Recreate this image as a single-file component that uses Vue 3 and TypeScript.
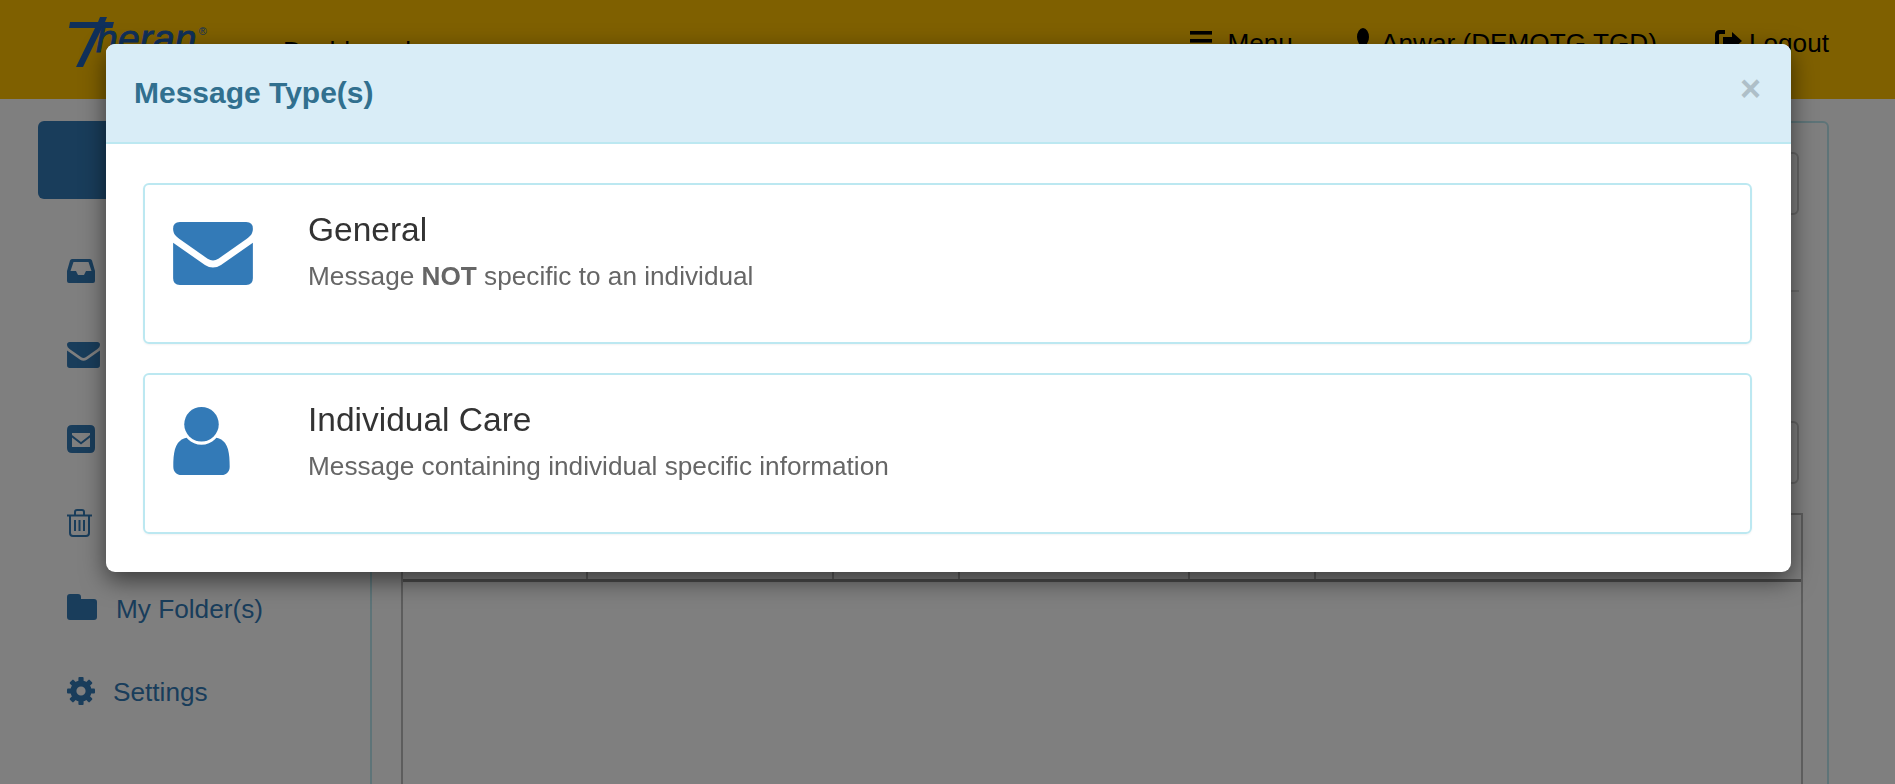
<script setup lang="ts">
const gearTeeth: number[] = [0, 45, 90, 135, 180, 225, 270, 315]
const columns: number[] = [185, 246, 126, 230, 126]
</script>

<template>
  <div class="page">
    <header class="topbar">
      <div class="logo">
        <svg class="logo-t" viewBox="0 0 46 50" aria-hidden="true">
          <path d="M1 5 H29 L31 0 H38 L36 5 H45 L43.500 11 H33 L14 50 H7 L26 11 H0 Z" />
        </svg>
        <span class="logo-word">heran</span>
        <span class="logo-reg">®</span>
      </div>
      <span class="dash">Dashboard</span>
      <nav class="nav">
        <a class="nav-item">
          <svg class="ic-menu" viewBox="0 0 22 20" aria-hidden="true">
            <rect y="0" width="22" height="3.600" />
            <rect y="8" width="22" height="3.600" />
            <rect y="16" width="22" height="3.600" />
          </svg>
          Menu
        </a>
        <a class="nav-item user">
          <svg class="ic-user" viewBox="0 0 12 24" aria-hidden="true">
            <ellipse cx="6" cy="9" rx="6" ry="9" />
            <rect y="16" width="12" height="8" rx="3" />
          </svg>
          Anwar (DEMOTG TGD)
        </a>
        <a class="nav-item logout">
          <svg class="ic-logout" viewBox="0 0 27 24" aria-hidden="true">
            <path d="M10 2 H5 Q2 2 2 5 V19 Q2 22 5 22 H10" fill="none" stroke="#000" stroke-width="4" />
            <path d="M8 7 H17 V2 L27 11 L17 20 V15 H8 Z" />
          </svg>
          Logout
        </a>
      </nav>
    </header>

    <main class="main">
      <aside class="sidebar">
        <button class="compose" type="button"></button>
        <ul class="side-list">
          <li class="side-item">
            <svg class="side-ic" width="28" height="24" viewBox="0 0 28 24" aria-hidden="true">
              <path fill-rule="evenodd" d="M5 0 H23 Q24.500 0 25 1.500 L28 12 V22 Q28 24 26 24 H2 Q0 24 0 22 V12 L3 1.500 Q3.500 0 5 0 Z M6.500 3 L3.500 12 H9 L11 16 H17 L19 12 H24.500 L21.500 3 Z" />
            </svg>
          </li>
          <li class="side-item">
            <svg class="side-ic" width="33" height="26" viewBox="0 0 238 188" aria-hidden="true">
              <path d="M20 0 H218 Q238 0 238 20 C238 35 230 42 220 50 L135 110 Q119 120 103 110 L18 50 C8 42 0 35 0 20 Q0 0 20 0 Z" />
              <path d="M0 62 L95 128 Q119 143 143 128 L238 62 V168 Q238 188 218 188 H20 Q0 188 0 168 Z" />
            </svg>
          </li>
          <li class="side-item">
            <svg class="side-ic" width="28" height="28" viewBox="0 0 28 28" aria-hidden="true">
              <path fill-rule="evenodd" d="M5 0 H23 Q28 0 28 5 V23 Q28 28 23 28 H5 Q0 28 0 23 V5 Q0 0 5 0 Z M5 8 V10 L14 17 L23 10 V8 Z M5 12.500 V22 H23 V12.500 L14 19.500 Z" />
            </svg>
          </li>
          <li class="side-item">
            <svg class="side-ic" width="25" height="28" viewBox="0 0 25 28" aria-hidden="true">
              <path d="M0 6.500 H25" fill="none" stroke="#337ab7" stroke-width="2" />
              <path d="M8 6 V3 Q8 1 10 1 H15 Q17 1 17 3 V6" fill="none" stroke="#337ab7" stroke-width="2" />
              <path d="M3 6.500 V24 Q3 27 6 27 H19 Q22 27 22 24 V6.500" fill="none" stroke="#337ab7" stroke-width="2" />
              <path d="M8 11 V22 M12.500 11 V22 M17 11 V22" fill="none" stroke="#337ab7" stroke-width="2" />
            </svg>
          </li>
          <li class="side-item">
            <svg class="side-ic" width="30" height="26" viewBox="0 0 30 26" aria-hidden="true">
              <path d="M3 0 H11 Q14 0 14 3 V5 H27 Q30 5 30 8 V23 Q30 26 27 26 H3 Q0 26 0 23 V3 Q0 0 3 0 Z" />
            </svg>
            <span class="folder-label">My Folder(s)</span>
          </li>
          <li class="side-item">
            <svg class="side-ic" width="28" height="28" viewBox="-14 -14 28 28" aria-hidden="true">
              <circle r="7.600" fill="none" stroke="#337ab7" stroke-width="6" />
              <rect
                v-for="deg in gearTeeth"
                :key="deg"
                x="-2.600"
                y="-14"
                width="5.200"
                height="6"
                rx="1"
                :transform="`rotate(${deg})`"
              />
            </svg>
            <span class="settings-label">Settings</span>
          </li>
        </ul>
      </aside>

      <section class="panel">
        <div class="field first"></div>
        <hr class="rule" />
        <div class="field second"></div>
        <div class="table">
          <div class="thead">
            <span v-for="w in columns" :key="w" class="th" :style="{ width: w + 'px' }"></span>
          </div>
        </div>
      </section>
    </main>

    <div class="backdrop"></div>

    <div class="modal" role="dialog">
      <div class="modal-head">
        <h4 class="modal-title">Message Type(s)</h4>
        <span class="close">×</span>
      </div>
      <div class="modal-body">
        <div class="card">
          <svg class="card-ic" width="80" height="63" viewBox="0 0 238 188" aria-hidden="true">
            <path d="M20 0 H218 Q238 0 238 20 C238 35 230 42 220 50 L135 110 Q119 120 103 110 L18 50 C8 42 0 35 0 20 Q0 0 20 0 Z" />
            <path d="M0 62 L95 128 Q119 143 143 128 L238 62 V168 Q238 188 218 188 H20 Q0 188 0 168 Z" />
          </svg>
          <div class="card-text">
            <div class="card-title">General</div>
            <div class="card-desc">Message <b>NOT</b> specific to an individual</div>
          </div>
        </div>
        <div class="card">
          <svg class="card-ic person" width="57" height="68" viewBox="0 0 170 205" aria-hidden="true">
            <circle cx="85" cy="52" r="52" />
            <path d="M0 180 C0 135 5 100 40 93 C52 106 68 114 85 114 C102 114 118 106 130 93 C165 100 170 135 170 180 C170 195 160 205 145 205 L25 205 C10 205 0 195 0 180 Z" />
          </svg>
          <div class="card-text">
            <div class="card-title">Individual Care</div>
            <div class="card-desc">Message containing individual specific information</div>
          </div>
        </div>
      </div>
    </div>
  </div>
</template>

<style scoped>
.page {
  position: relative;
  width: 1895px;
  height: 784px;
  overflow: hidden;
  background: #fff;
  font-family: "Liberation Sans", Arial, sans-serif;
  font-size: 26.2px;
}
.topbar {
  display: flex;
  align-items: flex-start;
  height: 99px;
  padding: 0 66px 0 69px;
  box-sizing: border-box;
  background: #ffc000;
  color: #000;
}
.logo {
  display: flex;
  align-items: flex-start;
  width: 214px;
  flex: none;
  color: #2060b4;
}
.logo-t {
  width: 46px;
  height: 50px;
  margin-top: 17px;
  flex: none;
  fill: #2060b4;
}
.logo-word {
  margin: 17px 0 0 -19px;
  font-size: 39px;
  line-height: 44px;
  font-style: italic;
  letter-spacing: 0.2px;
  -webkit-text-stroke: 0.8px #2060b4;
}
.logo-reg {
  margin: 25px 0 0 2px;
  font-size: 11px;
  line-height: 12px;
}
.dash {
  margin-top: 36px;
  line-height: 30px;
}
.nav {
  display: flex;
  margin-left: auto;
  padding-top: 28px;
  line-height: 30px;
}
.nav-item {
  display: flex;
  align-items: flex-start;
  white-space: nowrap;
}
.user {
  margin-left: 64px;
}
.logout {
  margin-left: 58px;
}
.ic-menu {
  width: 22px;
  height: 20px;
  margin: 3px 15px 0 0;
  fill: #000;
}
.ic-user {
  width: 12px;
  height: 24px;
  margin: 0 12px 0 0;
  fill: #000;
}
.ic-logout {
  width: 27px;
  height: 24px;
  margin: 2px 7px 0 0;
  fill: #000;
}
.main {
  display: flex;
  padding-top: 22px;
}
.sidebar {
  width: 370px;
  flex: none;
  padding-left: 38px;
  box-sizing: border-box;
}
.compose {
  display: block;
  width: 290px;
  height: 78px;
  margin: 0 0 30px;
  border: 0;
  border-radius: 6px;
  background: #337ab7;
}
.side-list {
  list-style: none;
  margin: 0;
  padding: 0 0 0 29px;
  color: #337ab7;
}
.side-item {
  display: flex;
  align-items: center;
  height: 84px;
}
.side-ic {
  fill: #337ab7;
  flex: none;
}
.folder-label {
  margin: 4px 0 0 19px;
}
.settings-label {
  margin: 2px 0 0 18px;
}
.panel {
  flex: 1;
  height: 720px;
  margin-right: 66px;
  padding: 29px 24px 0 29px;
  box-sizing: border-box;
  border: 2px solid #bce8f1;
  border-radius: 6px;
}
.field {
  height: 63px;
  margin-right: 4px;
  box-sizing: border-box;
  border: 2px solid #ccc;
  border-radius: 6px;
}
.rule {
  height: 0;
  margin: 75px 4px 0 0;
  border: 0;
  border-top: 2px solid #ddd;
}
.second {
  margin-top: 129px;
}
.table {
  height: 300px;
  margin-top: 29px;
  box-sizing: border-box;
  border: 2px solid #bbb;
  border-bottom: 0;
}
.thead {
  display: flex;
  height: 67px;
  border-bottom: 3px solid #999;
  box-sizing: border-box;
}
.th {
  flex: none;
  box-sizing: border-box;
  border-right: 2px solid #bbb;
}
.backdrop {
  position: fixed;
  inset: 0;
  background: rgba(0, 0, 0, 0.5);
}
.modal {
  position: absolute;
  left: 106px;
  top: 44px;
  width: 1685px;
  height: 528px;
  box-sizing: border-box;
  border-radius: 9px;
  background: #fff;
  box-shadow: 0 8px 24px rgba(0, 0, 0, 0.55);
  overflow: hidden;
}
.modal-head {
  display: flex;
  justify-content: space-between;
  align-items: flex-start;
  height: 100px;
  padding: 31px 30px 0 28px;
  box-sizing: border-box;
  border-bottom: 2px solid #bce8f1;
  background: #d9edf7;
  color: #31708f;
}
.modal-title {
  margin: 0;
  font-size: 30px;
  line-height: 36px;
  font-weight: 700;
}
.close {
  margin-top: -10px;
  font-size: 36px;
  line-height: 48px;
  font-weight: 700;
  color: #aebfc8;
}
.modal-body {
  display: flex;
  flex-direction: column;
  gap: 29px;
  padding: 39px 39px 0 37px;
}
.card {
  display: flex;
  align-items: flex-start;
  height: 161px;
  padding: 0 28px;
  box-sizing: border-box;
  border: 2px solid #bce8f1;
  border-radius: 6px;
  box-shadow: 0 1px 2px rgba(0, 0, 0, 0.05);
}
.card-ic {
  flex: none;
  margin-top: 37px;
  margin-right: 55px;
  fill: #337ab7;
}
.card-ic.person {
  margin-top: 32px;
  margin-right: 78px;
}
.card-text {
  padding-top: 26px;
}
.card-title {
  font-size: 33.5px;
  line-height: 38px;
  color: #333;
}
.card-desc {
  margin-top: 12px;
  font-size: 26.2px;
  line-height: 30px;
  color: #666;
}
</style>

<style>
html,
body {
  margin: 0;
  overflow: hidden;
}
</style>
